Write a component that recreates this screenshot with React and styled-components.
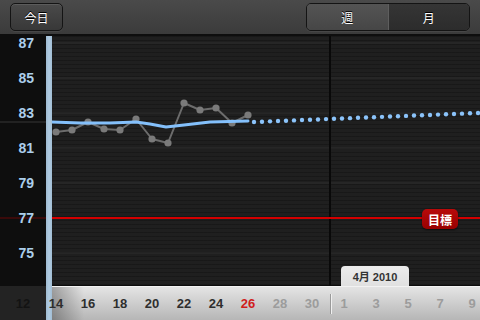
import React from 'react';
import styled, { createGlobalStyle } from 'styled-components';

const GlobalStyle = createGlobalStyle`
  html, body { margin: 0; padding: 0; background: #111; }
  body { font-family: "Liberation Sans", "Noto Sans CJK JP", sans-serif; }
`;

const Y_LABELS = [87, 85, 83, 81, 79, 77, 75];
const DAYS = [14, 16, 18, 20, 22, 24, 26, 28, 30];
const NEXT_DAYS = [1, 3, 5, 7, 9];

// chart coords are page coords minus (52, 36)
const OX = 52;
const OY = 36;
const WEIGHTS = [
  [56, 132], [72, 130], [88, 122], [104, 129], [120, 130], [136, 119], [152, 139],
  [168, 143], [184, 103], [200, 110], [216, 108], [232, 123], [248, 115],
];
const TREND = [
  [52, 122], [80, 123], [110, 123], [136, 122], [150, 124], [166, 127],
  [184, 125], [210, 122], [248, 121],
];
const GRID_Y = [43, 78, 113, 148, 183, 253];

const dots = [];
for (let x = 254; x <= 480; x += 8) {
  dots.push([x, 122 - ((x - 254) * 9) / 224]);
}

const toPoints = (list) => list.map(([x, y]) => `${x - OX},${y - OY}`).join(' ');

const Screen = styled.div`
  width: 480px;
  height: 320px;
  overflow: hidden;
  display: grid;
  grid-template-columns: 46px 6px minmax(0, 1fr);
  grid-template-rows: 36px 250px 34px;
  background: #111;
`;

const Toolbar = styled.div`
  grid-column: 1 / -1;
  display: flex;
  align-items: center;
  justify-content: space-between;
  padding: 0 10px;
  background: linear-gradient(#4a4a4a, #3b3b3b);
  border-bottom: 2px solid #0e0e0e;
`;

const ToolButton = styled.button`
  width: 53px;
  height: 28px;
  padding: 0;
  border: 1px solid #141414;
  border-radius: 5px;
  background: linear-gradient(#4a4a4a, #383838);
  box-shadow: inset 0 1px 0 rgba(255, 255, 255, 0.1), 0 1px 0 rgba(255, 255, 255, 0.06);
  color: #fff;
  font-size: 12px;
  font-family: "Noto Sans CJK JP", sans-serif;
  text-shadow: 0 -1px 0 #000;
`;

const Segmented = styled.div`
  width: 164px;
  height: 28px;
  display: flex;
  border: 1px solid #141414;
  border-radius: 5px;
  overflow: hidden;
  box-sizing: border-box;
  box-shadow: 0 1px 0 rgba(255, 255, 255, 0.06);
`;

const Segment = styled.div`
  flex: 1;
  display: flex;
  align-items: center;
  justify-content: center;
  color: #fff;
  font-size: 12px;
  font-family: "Noto Sans CJK JP", sans-serif;
  text-shadow: 0 -1px 0 #000;
  background: ${(p) => (p.$active ? 'linear-gradient(#545454, #464646)' : 'linear-gradient(#353535, #2c2c2c)')};
  border-right: ${(p) => (p.$active ? '1px solid #5e5e5e' : 'none')};
`;

const YAxis = styled.div`
  grid-row: 2;
  grid-column: 1;
  display: flex;
  flex-direction: column;
  background:
    linear-gradient(to bottom, transparent 85px, #222 85px, #222 87px, transparent 87px),
    linear-gradient(to bottom, transparent 181px, #3a0a0a 181px, #3a0a0a 183px, transparent 183px),
    #0e0e0e;
  overflow: hidden;
`;

const YLabel = styled.div`
  flex: 0 0 35px;
  line-height: 35px;
  margin-top: ${(p) => (p.$first ? '-10.5px' : '0')};
  padding-right: 12px;
  text-align: right;
  color: #acceeb;
  font-size: 14px;
  font-weight: bold;
`;

const Bar = styled.div`
  grid-row: 2 / 4;
  grid-column: 2;
  background: linear-gradient(to right, #9fbbd2, #b0cbe1 50%, #a2bed5);
`;

const Chart = styled.div`
  grid-row: 2;
  grid-column: 3;
  position: relative;
  background:
    repeating-linear-gradient(to bottom, rgba(0, 0, 0, 0.22) 0 1px, transparent 1px 4px),
    #1f1f1f;
  border-bottom: 1px solid #0c0c0c;
  box-sizing: border-box;
`;

const Plot = styled.svg`
  display: block;
  width: 428px;
  height: 250px;
`;

const GoalBadge = styled.div`
  position: absolute;
  left: 370px;
  top: 173px;
  width: 36px;
  height: 20px;
  display: flex;
  align-items: center;
  justify-content: center;
  border-radius: 5px;
  background: linear-gradient(#b80a0a, #980000);
  box-shadow: 0 1px 2px rgba(0, 0, 0, 0.6);
  color: #fff;
  font-size: 12px;
  font-weight: bold;
  font-family: "Noto Sans CJK JP", sans-serif;
`;

const MonthTab = styled.div`
  position: absolute;
  left: 289px;
  bottom: -1px;
  width: 68px;
  height: 20px;
  display: flex;
  align-items: center;
  justify-content: center;
  border-radius: 4px 4px 0 0;
  background: linear-gradient(#ececec, #e0e0e0);
  color: #333;
  font-size: 11px;
  font-weight: bold;
  font-family: "Liberation Sans", "Noto Sans CJK JP", sans-serif;
  z-index: 2;
`;

const FooterLeft = styled.div`
  grid-row: 3;
  grid-column: 1;
  display: flex;
  align-items: center;
  justify-content: center;
  background: #232323;
  color: #131313;
  font-size: 13px;
  font-weight: bold;
`;

const XAxis = styled.div`
  grid-row: 3;
  grid-column: 3;
  min-width: 0;
  display: flex;
  align-items: center;
  background:
    linear-gradient(to right, rgba(0, 0, 0, 0.3), rgba(0, 0, 0, 0) 32px),
    linear-gradient(#e4e4e4, #b6b6b6);
  border-top: 1px solid #f2f2f2;
  box-sizing: border-box;
`;

const Ticks = styled.div`
  display: flex;
  align-items: center;
  margin-left: -12px;
  height: 100%;
`;

const Tick = styled.span`
  flex: 0 0 32px;
  text-align: center;
  font-size: 13px;
  font-weight: bold;
  color: ${(p) => (p.$tone === 'today' ? '#d01c1c' : p.$tone === 'future' ? '#9c9c9c' : '#2e2e2e')};
`;

const MonthDivider = styled.span`
  flex: 0 0 1px;
  height: 20px;
  margin: 0 -3px 0 2px;
  background: #9a9a9a;
  box-shadow: 1px 0 0 #f0f0f0;
`;

const toneFor = (d) => {
  if (d < 26) return 'past';
  if (d === 26) return 'today';
  return 'future';
};

export default function App() {
  return (
    <>
      <GlobalStyle />
      <Screen>
        <Toolbar>
          <ToolButton type="button">今日</ToolButton>
          <Segmented>
            <Segment $active>週</Segment>
            <Segment>月</Segment>
          </Segmented>
        </Toolbar>

        <YAxis>
          {Y_LABELS.map((v, i) => (
            <YLabel key={v} $first={i === 0}>{v}</YLabel>
          ))}
        </YAxis>

        <Bar />

        <Chart>
          <Plot viewBox="0 0 428 250">
            {GRID_Y.map((y) => (
              <line key={y} x1="0" x2="428" y1={y - OY} y2={y - OY} stroke="#2f2f2f" strokeWidth="1" />
            ))}
            <line x1={330 - OX} x2={330 - OX} y1="0" y2="250" stroke="#090909" strokeWidth="2" />
            <line x1="0" x2="428" y1={218 - OY} y2={218 - OY} stroke="#d40000" strokeWidth="2" />
            <polyline
              points={toPoints(WEIGHTS)}
              fill="none"
              stroke="#6c6c6c"
              strokeWidth="2"
              strokeLinejoin="round"
            />
            {WEIGHTS.map(([x, y]) => (
              <circle key={x} cx={x - OX} cy={y - OY} r="3.6" fill="#7a7a7a" />
            ))}
            <polyline
              points={toPoints(TREND)}
              fill="none"
              stroke="#84c0fb"
              strokeWidth="3"
              strokeLinecap="round"
              strokeLinejoin="round"
            />
            {dots.map(([x, y]) => (
              <circle key={x} cx={x - OX} cy={y - OY} r="2.2" fill="#8cc4fb" />
            ))}
          </Plot>
          <GoalBadge>目標</GoalBadge>
          <MonthTab>4月 2010</MonthTab>
        </Chart>

        <FooterLeft>12</FooterLeft>

        <XAxis>
          <Ticks>
            {DAYS.map((d) => (
              <Tick key={d} $tone={toneFor(d)}>{d}</Tick>
            ))}
            <MonthDivider />
            {NEXT_DAYS.map((d) => (
              <Tick key={`n${d}`} $tone="future">{d}</Tick>
            ))}
          </Ticks>
        </XAxis>
      </Screen>
    </>
  );
}
